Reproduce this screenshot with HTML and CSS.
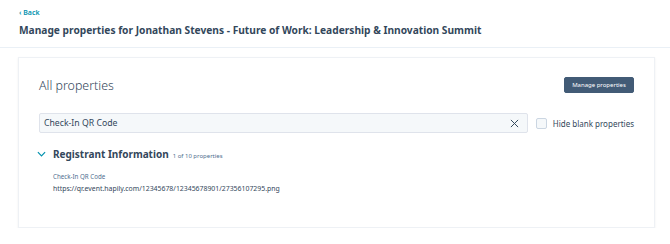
FILE: index.html
```html
<!DOCTYPE html>
<html lang="en">
<head>
  <meta charset="UTF-8">
  <title>Manage properties</title>
  <link rel="stylesheet" href="styles.css">
</head>
<body>
<div class="header">
  <a class="back" href="#">&#8249; Back</a>
  <h1 class="title">Manage properties for Jonathan Stevens - Future of Work: Leadership &amp; Innovation Summit</h1>
</div>
<div class="card">
  <div class="card-top">
    <h2 class="card-title">All properties</h2>
    <button class="btn" type="button">Manage properties</button>
  </div>
  <div class="filters">
    <div class="search">
      <span class="search-text">Check-In QR Code</span>
      <svg class="clear" width="9" height="9" viewBox="0 0 10 10">
        <path d="M1 1 L9 9 M9 1 L1 9" stroke="#33475b" stroke-width="1.1" fill="none"/>
      </svg>
    </div>
    <label class="hide">
      <span class="box"></span>
      <span>Hide blank properties</span>
    </label>
  </div>
  <div class="group">
    <div class="group-head">
      <svg class="chev" width="9" height="6" viewBox="0 0 10 6">
        <path d="M1 1 L5 5 L9 1" stroke="#0091ae" stroke-width="1.3" fill="none"/>
      </svg>
      <span class="group-name">Registrant Information</span>
      <span class="group-count">1 of 10 properties</span>
    </div>
    <div class="prop">
      <div class="prop-label">Check-In QR Code</div>
      <div class="prop-value">https://qr.event.hapily.com/12345678/12345678901/27356107295.png</div>
    </div>
  </div>
</div>
</body>
</html>
```

FILE: styles.css
```css
body {
    margin: 0;
    background: #fff;
    font-family: "Noto Sans", "Open Sans", sans-serif;
    color: #33475b;
}

.header {
    padding: 8px 19px 0;
    height: 39px;
    border-bottom: 1px solid #eaf0f6;
}

.back {
    display: block;
    font-size: 7px;
    font-weight: 600;
    color: #0091ae;
    text-decoration: none;
    line-height: 9px;
}

.title {
    margin: 5px 0 0;
    font-size: 10.2px;
    font-weight: 700;
    line-height: 16px;
}

.card {
    margin: 9px 15px 0 18px;
    height: 171px;
    box-sizing: border-box;
    border: 1px solid #eef1f5;
    box-shadow: 0 1px 2px rgba(45, 62, 80, 0.08);
    padding: 0 20px;
}

.card-top {
    display: flex;
    justify-content: space-between;
    align-items: center;
    height: 18px;
    margin-top: 18px;
}

.card-title {
    margin: 0;
    font-size: 12.4px;
    font-weight: 300;
}

.btn {
    width: 70px;
    height: 16px;
    padding: 0;
    border: 1px solid #425b76;
    border-radius: 2px;
    background: #425b76;
    color: #fff;
    font-family: inherit;
    font-size: 6px;
}

.filters {
    display: flex;
    align-items: center;
    margin-top: 19px;
}

.search {
    width: 492px;
    height: 20px;
    box-sizing: border-box;
    background: #f5f8fa;
    border: 1px solid #dfe3eb;
    border-radius: 2px;
    display: flex;
    align-items: center;
    justify-content: space-between;
    padding: 0 8px 0 4px;
    font-size: 8.7px;
}

.hide {
    display: flex;
    align-items: center;
    margin-left: 8px;
    font-size: 8px;
    white-space: nowrap;
}

.box {
    width: 9px;
    height: 9px;
    border: 1px solid #cbd6e2;
    border-radius: 2px;
    background: #f5f8fa;
    margin-right: 6px;
}

.group {
    margin-top: 14px;
}

.group-head {
    display: flex;
    align-items: baseline;
}

.chev {
    margin: 0 7px 0 -2px;
    align-self: center;
}

.group-name {
    font-size: 10px;
    font-weight: 700;
}

.group-count {
    margin-left: 4px;
    font-size: 6px;
    color: #516f90;
}

.prop {
    padding-left: 14px;
    margin-top: 11px;
}

.prop-label {
    font-size: 6.2px;
    color: #516f90;
}

.prop-value {
    margin-top: 3px;
    font-size: 6.9px;
}
```
